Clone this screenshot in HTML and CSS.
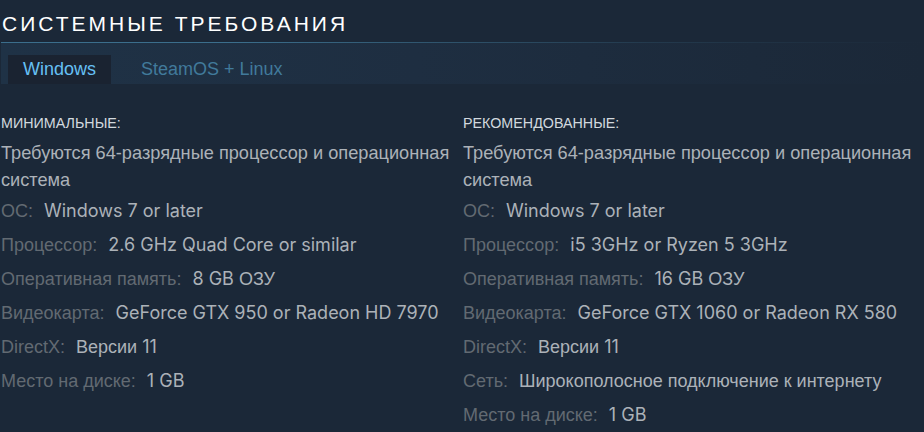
FILE: index.html
```html
<!DOCTYPE html>
<html lang="ru">
<head>
<meta charset="utf-8">
<title>Системные требования</title>
<link rel="stylesheet" href="styles.css">
</head>
<body>
<section class="sysreq">
  <h2 class="title">Системные требования</h2>
  <div class="tabs">
    <div class="tab active">Windows</div>
    <div class="tab">SteamOS + Linux</div>
  </div>
  <div class="columns">
    <div class="col">
      <div class="col-head">МИНИМАЛЬНЫЕ:</div>
      <div class="note">Требуются 64-разрядные процессор и операционная система</div>
      <ul class="list">
        <li><span class="label">ОС:</span><span class="val">Windows 7 or later</span></li>
        <li><span class="label">Процессор:</span><span class="val">2.6 GHz Quad Core or similar</span></li>
        <li><span class="label">Оперативная память:</span><span class="val">8 GB <span class="cyr">ОЗУ</span></span></li>
        <li><span class="label">Видеокарта:</span><span class="val">GeForce GTX 950 or Radeon HD 7970</span></li>
        <li><span class="label">DirectX:</span><span class="val"><span class="cyr">Версии</span> 11</span></li>
        <li><span class="label">Место на диске:</span><span class="val">1 GB</span></li>
      </ul>
    </div>
    <div class="col">
      <div class="col-head">РЕКОМЕНДОВАННЫЕ:</div>
      <div class="note">Требуются 64-разрядные процессор и операционная система</div>
      <ul class="list">
        <li><span class="label">ОС:</span><span class="val">Windows 7 or later</span></li>
        <li><span class="label">Процессор:</span><span class="val">i5 3GHz or Ryzen 5 3GHz</span></li>
        <li><span class="label">Оперативная память:</span><span class="val">16 GB <span class="cyr">ОЗУ</span></span></li>
        <li><span class="label">Видеокарта:</span><span class="val">GeForce GTX 1060 or Radeon RX 580</span></li>
        <li><span class="label">DirectX:</span><span class="val"><span class="cyr">Версии</span> 11</span></li>
        <li><span class="label">Сеть:</span><span class="val"><span class="cyr">Широкополосное подключение к интернету</span></span></li>
        <li><span class="label">Место на диске:</span><span class="val">1 GB</span></li>
      </ul>
    </div>
  </div>
</section>
</body>
</html>
```
FILE: styles.css
```css
html, body {
  margin: 0;
  padding: 0;
  background: #1b2838;
}
body {
  font-family: "Liberation Sans", Arial, sans-serif;
  color: #acb2b8;
  overflow: hidden;
}
.sysreq {
  padding: 0 0 0 1px;
}
.title {
  margin: 0;
  padding: 12px 0 7px 1px;
  font-family: "Liberation Sans", Arial, sans-serif;
  font-weight: normal;
  font-size: 21px;
  line-height: 23px;
  letter-spacing: 3px;
  text-transform: uppercase;
  color: #ffffff;
  border-bottom: 1px solid;
  border-image: linear-gradient(to right, #3b6e8c 0%, #3b6e8c 25%, rgba(59,110,140,0.25) 70%, rgba(27,40,56,0) 100%) 1;
}
.tabs {
  display: flex;
  gap: 15px;
  padding: 12px 0 0 7px;
  height: 29px;
  background: linear-gradient(to right, #1f3246 0%, #1e2e41 45%, #1b2838 100%);
}
.tab {
  padding: 0 15px;
  height: 29px;
  line-height: 29px;
  font-size: 18px;
  color: #417a9b;
}
.tab.active {
  background: #1a2331;
  color: #66c0f4;
}
.columns {
  display: grid;
  grid-template-columns: 462px 1fr;
  padding-top: 30px;
}
.col {
  min-width: 0;
  padding-right: 8px;
}
.col-head {
  font-size: 14.3px;
  line-height: 18px;
  color: #d2d9df;
  margin-bottom: 8px;
}
.note {
  font-size: 18.2px;
  line-height: 27px;
}
.list {
  list-style: none;
  margin: 0;
  padding: 0;
}
.list li {
  display: flex;
  align-items: baseline;
  height: 34px;
  line-height: 34px;
  font-size: 18px;
  white-space: nowrap;
}
.label {
  color: #626a72;
  margin-right: 11px;
}
.val {
  font-family: Inter, "Liberation Sans", sans-serif;
  font-size: 18px;
  color: #acb2b8;
}
.cyr {
  font-family: "Liberation Sans", Arial, sans-serif;
}
```
